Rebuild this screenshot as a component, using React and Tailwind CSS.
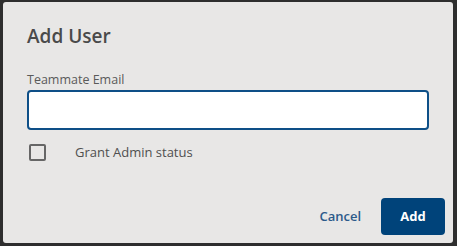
export default function App() {
  return (
    <div className="w-[457px] h-[246px] bg-[#2e2e2e] pt-[2px] pl-[3px] pr-[4px] pb-[3px] font-['Open_Sans','Noto_Sans',sans-serif]">
      <div className="h-full rounded-[3px] bg-[#e8e7e6] pl-[24px] pr-[8px] flex flex-col">
        <h2 className="mt-[21px] text-[19px] leading-[26px] font-semibold text-[#4a4a4a]">Add User</h2>
        <label className="mt-[22px] text-[12.5px] leading-[17px] text-[#5a5a5a]">Teammate Email</label>
        <input
          type="text"
          className="mt-[2px] mr-[16px] h-[40px] rounded-[4px] border-2 border-[#0e4f87] bg-white outline-none"
        />
        <div className="mt-[13px] flex items-center">
          <span className="ml-[2px] w-[17px] h-[17px] rounded-[2px] border-2 border-[#666666]"></span>
          <span className="ml-[29px] text-[13px] text-[#4f4f4f]">Grant Admin status</span>
        </div>
        <div className="mt-auto mb-[8px] flex items-center justify-end gap-[20px]">
          <button className="text-[13px] font-semibold text-[#2c5a8a]">Cancel</button>
          <button className="w-[64px] h-[37px] rounded-[4px] bg-[#00437a] text-[13px] font-bold text-white">Add</button>
        </div>
      </div>
    </div>
  )
}
